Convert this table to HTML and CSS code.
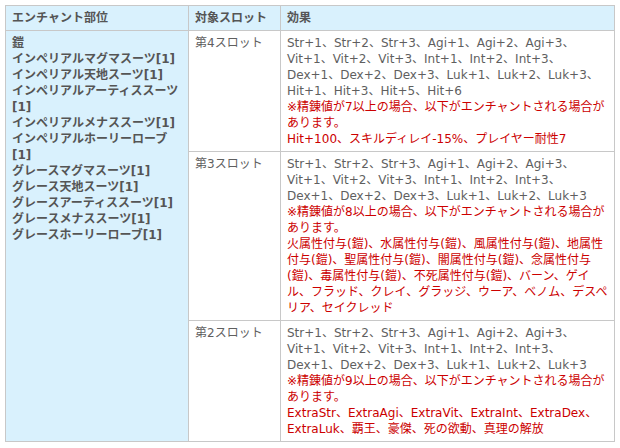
FILE: index.html
```html
<!DOCTYPE html>
<html lang="ja">
<head>
<meta charset="utf-8">
<title>エンチャント</title>
<link rel="stylesheet" href="styles.css">
</head>
<body>
<table class="enchant">
  <colgroup>
    <col class="c-part">
    <col class="c-slot">
    <col class="c-effect">
  </colgroup>
  <thead>
    <tr>
      <th>エンチャント部位</th>
      <th>対象スロット</th>
      <th>効果</th>
    </tr>
  </thead>
  <tbody>
    <tr>
      <td class="part" rowspan="3">
        <div>鎧</div>
        <div>インペリアルマグマスーツ[1]</div>
        <div>インペリアル天地スーツ[1]</div>
        <div>インペリアルアーティススーツ[1]</div>
        <div>インペリアルメナススーツ[1]</div>
        <div>インペリアルホーリーローブ[1]</div>
        <div>グレースマグマスーツ[1]</div>
        <div>グレース天地スーツ[1]</div>
        <div>グレースアーティススーツ[1]</div>
        <div>グレースメナススーツ[1]</div>
        <div>グレースホーリーローブ[1]</div>
      </td>
      <td class="slot">第4スロット</td>
      <td class="effect">
        <div>Str+1、Str+2、Str+3、Agi+1、Agi+2、Agi+3、Vit+1、Vit+2、Vit+3、Int+1、Int+2、Int+3、Dex+1、Dex+2、Dex+3、Luk+1、Luk+2、Luk+3、Hit+1、Hit+3、Hit+5、Hit+6</div>
        <div class="red">※精錬値が7以上の場合、以下がエンチャントされる場合があります。</div>
        <div class="red">Hit+100、スキルディレイ-15%、プレイヤー耐性7</div>
      </td>
    </tr>
    <tr>
      <td class="slot">第3スロット</td>
      <td class="effect">
        <div>Str+1、Str+2、Str+3、Agi+1、Agi+2、Agi+3、Vit+1、Vit+2、Vit+3、Int+1、Int+2、Int+3、Dex+1、Dex+2、Dex+3、Luk+1、Luk+2、Luk+3</div>
        <div class="red">※精錬値が8以上の場合、以下がエンチャントされる場合があります。</div>
        <div class="red">火属性付与(鎧)、水属性付与(鎧)、風属性付与(鎧)、地属性付与(鎧)、聖属性付与(鎧)、闇属性付与(鎧)、念属性付与(鎧)、毒属性付与(鎧)、不死属性付与(鎧)、バーン、ゲイル、フラッド、クレイ、グラッジ、ウーア、ベノム、デスペリア、セイクレッド</div>
      </td>
    </tr>
    <tr>
      <td class="slot">第2スロット</td>
      <td class="effect">
        <div>Str+1、Str+2、Str+3、Agi+1、Agi+2、Agi+3、Vit+1、Vit+2、Vit+3、Int+1、Int+2、Int+3、Dex+1、Dex+2、Dex+3、Luk+1、Luk+2、Luk+3</div>
        <div class="red">※精錬値が9以上の場合、以下がエンチャントされる場合があります。</div>
        <div class="red">ExtraStr、ExtraAgi、ExtraVit、ExtraInt、ExtraDex、ExtraLuk、覇王、豪傑、死の欲動、真理の解放</div>
      </td>
    </tr>
  </tbody>
</table>
</body>
</html>
```

FILE: styles.css
```css
html, body {
  margin: 0;
  padding: 0;
  background: #ffffff;
}

body {
  padding: 5px;
  font-family: "DejaVu Sans", "Noto Sans CJK JP", sans-serif;
  font-size: 12px;
  line-height: 16px;
  color: #5f5f5f;
}

.enchant {
  border-collapse: collapse;
  table-layout: fixed;
  width: 610px;
  border: 1px solid #c8c8c8;
}

.c-part { width: 183px; }
.c-slot { width: 92px; }

.enchant th,
.enchant td {
  border: 1px solid #c8c8c8;
  padding: 4px 6px;
  text-align: left;
  vertical-align: top;
}

.enchant th {
  background: #d9f1fd;
  font-weight: bold;
  color: #555555;
}

.enchant td.part {
  background: #d9f1fd;
  font-weight: bold;
  color: #555555;
}

.red {
  color: #cc0000;
}
```
